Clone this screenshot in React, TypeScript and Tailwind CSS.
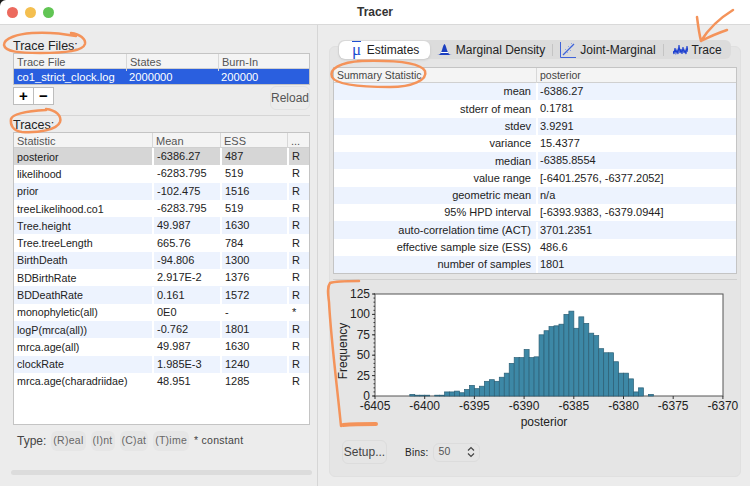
const font = "font-['Liberation_Sans',Arial,sans-serif]";

const traces = [
  ["posterior", "-6386.27", "487", "R"],
  ["likelihood", "-6283.795", "519", "R"],
  ["prior", "-102.475", "1516", "R"],
  ["treeLikelihood.co1", "-6283.795", "519", "R"],
  ["Tree.height", "49.987", "1630", "R"],
  ["Tree.treeLength", "665.76", "784", "R"],
  ["BirthDeath", "-94.806", "1300", "R"],
  ["BDBirthRate", "2.917E-2", "1376", "R"],
  ["BDDeathRate", "0.161", "1572", "R"],
  ["monophyletic(all)", "0E0", "-", "*"],
  ["logP(mrca(all))", "-0.762", "1801", "R"],
  ["mrca.age(all)", "49.987", "1630", "R"],
  ["clockRate", "1.985E-3", "1240", "R"],
  ["mrca.age(charadriidae)", "48.951", "1285", "R"],
];

const stats = [
  ["mean", "-6386.27"],
  ["stderr of mean", "0.1781"],
  ["stdev", "3.9291"],
  ["variance", "15.4377"],
  ["median", "-6385.8554"],
  ["value range", "[-6401.2576, -6377.2052]"],
  ["geometric mean", "n/a"],
  ["95% HPD interval", "[-6393.9383, -6379.0944]"],
  ["auto-correlation time (ACT)", "3701.2351"],
  ["effective sample size (ESS)", "486.6"],
  ["number of samples", "1801"],
];

// bar heights, one per half unit starting at -6405
const bins = [
  0, 0, 0, 0, 0, 0, 0, 2, 1, 1, 1, 0, 1, 1, 5, 5, 6, 4, 8, 13, 9, 12, 18, 20, 18, 23, 28, 40, 47, 47, 57, 47, 48, 75,
  80, 85, 86, 88, 100, 104, 83, 97, 89, 77, 74, 58, 53, 53, 42, 28, 28, 21, 5, 10, 0, 2,
];

function Histogram() {
  const left = 42;
  const right = 390;
  const top = 14;
  const bottom = 116;
  const xTicks = [-6405, -6400, -6395, -6390, -6385, -6380, -6375, -6370];
  const yTicks = [0, 25, 50, 75, 100, 125];
  const step = (right - left) / 70;
  const perCount = (bottom - top) / 125;
  return (
    <svg width="404" height="160" className="block overflow-visible">
      <rect x={left} y={top} width={right - left} height={bottom - top} fill="#fff" stroke="#555" strokeWidth="1" />
      {bins.map((b, i) =>
        b > 0 ? (
          <rect
            key={i}
            x={left + i * step}
            y={bottom - b * perCount}
            width={step}
            height={b * perCount}
            fill="#3d88a6"
            stroke="#2c5f75"
            strokeWidth="0.7"
          />
        ) : null,
      )}
      {yTicks.map((v) => (
        <g key={v}>
          <line x1={left - 3} x2={left} y1={bottom - v * perCount} y2={bottom - v * perCount} stroke="#333" />
          <text x={left - 5} y={bottom - v * perCount + 4} textAnchor="end" fontSize="12" fill="#222">
            {v}
          </text>
        </g>
      ))}
      {Array.from({ length: 26 }, (_, i) => (
        <line key={i} x1={left - 1.5} x2={left} y1={bottom - i * 5 * perCount} y2={bottom - i * 5 * perCount} stroke="#333" />
      ))}
      {xTicks.map((v, i) => (
        <g key={v}>
          <line x1={left + i * 49.7} x2={left + i * 49.7} y1={bottom} y2={bottom + 3} stroke="#333" />
          <text x={left + i * 49.7} y={bottom + 14} textAnchor="middle" fontSize="12" fill="#222">
            {v}
          </text>
        </g>
      ))}
      <text x="211" y="146" textAnchor="middle" fontSize="12" fill="#222">
        posterior
      </text>
      <text transform="translate(14 71) rotate(-90)" textAnchor="middle" fontSize="12" fill="#222">
        Frequency
      </text>
    </svg>
  );
}

function MuIcon() {
  return (
    <span className="relative w-[14px] text-center font-['Liberation_Serif',serif] text-[17px] leading-[15px] text-[#1f4fd0]">
      <span className="absolute left-[2px] top-[-1px] h-px w-[9px] bg-[#1f4fd0]" />
      μ
    </span>
  );
}

function DensityIcon() {
  return (
    <svg width="15" height="13" viewBox="0 0 15 13">
      <path d="M0 12 C3 12 4 10 5 7 C6 3 7 1 7.5 1 C8 1 9 3 10 7 C11 10 12 12 15 12 Z" fill="#1c3fc0" />
      <path d="M4 9.5 H11" stroke="#fff" strokeWidth="1" />
    </svg>
  );
}

function JointIcon() {
  return (
    <svg width="16" height="16" viewBox="0 0 16 16">
      <path d="M0.5 0 V15.5 H16" fill="none" stroke="#3f63d8" strokeWidth="1" />
      <path d="M3 13 L14 2" stroke="#3f63d8" strokeWidth="1.2" />
      <path d="M5 8 l1 -1 M8 5 l1 -1 M10 9 l1 -1 M12 5 l1 -1 M7 11 l1 -1 M11 2 l1 -1" stroke="#8aa2ea" strokeWidth="1" />
    </svg>
  );
}

function TraceIcon() {
  return (
    <svg width="15" height="12" viewBox="0 0 15 12">
      <path
        d="M0 7 L1 10 L2 4 L3 9 L4 6 L5 10 L6 1 L7 9 L8 5 L9 10 L10 3 L11 9 L12 6 L13 10 L14 2 L15 8"
        fill="none"
        stroke="#1c3fd0"
        strokeWidth="1.1"
      />
    </svg>
  );
}

function Annotations() {
  const orange = "#f4935a";
  return (
    <svg width="750" height="486" className="pointer-events-none absolute left-0 top-0" fill="none" stroke={orange} strokeLinecap="round" strokeLinejoin="round">
      <path strokeWidth="2.5" d="M71 33 C80 34 86 39 85 44 C83 51 66 53 40 53 C20 53 5 52 4 45 C4 38 18 34 32 33 C46 32 60 33 76 36" />
      <path strokeWidth="2.5" d="M46 109 C56 110 62 116 60 122 C57 130 38 133 22 132 C13 131 10 125 11 119 C13 113 28 111 46 110" />
      <path strokeWidth="2.5" d="M358 61 C390 60 420 62 425 71 C428 80 412 87 390 87 C365 87 336 85 332 77 C329 69 340 62 362 61" />
      <path strokeWidth="2.5" d="M733 10 C720 18 709 28 701 41 M697 17 C698 25 699 33 701 41 C709 37 718 33 727 30" />
      <path strokeWidth="2.5" d="M359 281 C348 281 336 281 330 283 C327 287 328 294 329 302 C331 340 337 385 341 426" />
      <path strokeWidth="4" d="M343 425 C354 424 366 424 376 424" />
    </svg>
  );
}

export default function App() {
  return (
    <div className={`relative flex h-[486px] w-[750px] flex-col overflow-hidden bg-[#1a1a1a] text-[11px] text-[#222] ${font}`}>
      <div className="relative flex h-[25px] shrink-0 items-center justify-center rounded-tl-[6px] border-b border-[#d9d9d9] bg-white">
        <div className="absolute left-[7px] top-[7px] flex gap-[7px]">
          <span className="h-[11px] w-[11px] rounded-full bg-[#ec6a5e]" />
          <span className="h-[11px] w-[11px] rounded-full bg-[#f4bf4f]" />
          <span className="h-[11px] w-[11px] rounded-full bg-[#61c554]" />
        </div>
        <span className="text-[12px] font-bold text-[#333]">Tracer</span>
      </div>

      <div className="flex flex-1 bg-[#ececec]">
        {/* left column */}
        <div className="flex w-[318px] shrink-0 flex-col border-r border-[#d6d6d6] pl-[13px] pr-[7px]">
          <div className="flex h-[28px] items-end text-[12.5px] leading-[14px]">Trace Files:</div>
          <div className="w-[297px] border border-[#c4c4c4] bg-white">
            <div className="grid h-[15px] grid-cols-[112px_92px_1fr] items-center border-b border-[#d0d0d0] bg-[#f4f4f4] text-[#555]">
              <span className="pl-[3px]">Trace File</span>
              <span className="border-l border-[#d8d8d8] pl-[3px]">States</span>
              <span className="border-l border-[#d8d8d8] pl-[3px]">Burn-In</span>
            </div>
            <div className="grid h-[15px] grid-cols-[112px_92px_1fr] items-center bg-[#2a5fdf] text-[11.2px] text-white">
              <span className="pl-[3px]">co1_strict_clock.log</span>
              <span className="pl-[3px]">2000000</span>
              <span className="pl-[3px]">200000</span>
            </div>
          </div>

          <div className="flex h-[31px] items-start justify-between border-b border-[#d6d6d6]">
            <div className="mt-[2px] flex h-[18px] w-[41px] border border-[#bdbdbd] bg-white text-[15px] font-bold leading-[15px] text-black">
              <span className="flex-1 border-r border-[#bdbdbd] text-center">+</span>
              <span className="flex-1 text-center">−</span>
            </div>
            <div className="mt-[1px] flex h-[24px] w-[40px] items-center justify-center rounded-md border border-[#e2e2e2] text-[12px] text-[#555]">
              Reload
            </div>
          </div>

          <div className="flex h-[16px] items-end text-[12.5px] leading-[14px]">Traces:</div>
          <div className="flex h-[293px] w-[297px] flex-col border border-[#c4c4c4] bg-white">
            <div className="grid h-[15px] shrink-0 grid-cols-[138px_68px_67px_1fr] items-center border-b border-[#d0d0d0] bg-[#f4f4f4] text-[#555]">
              <span className="pl-[3px]">Statistic</span>
              <span className="border-l border-[#d8d8d8] pl-[3px]">Mean</span>
              <span className="border-l border-[#d8d8d8] pl-[3px]">ESS</span>
              <span className="border-l border-[#d8d8d8] pl-[3px]">...</span>
            </div>
            {traces.map((row, i) => (
              <div
                key={row[0]}
                className={`grid h-[17.3px] shrink-0 grid-cols-[138px_68px_67px_1fr] items-center ${
                  i === 0 ? "bg-[#d6d6d6]" : i % 2 === 0 ? "bg-[#edf3fe]" : "bg-white"
                }`}
              >
                <span className="pl-[3px] text-[10.7px]">{row[0]}</span>
                <span className="border-l-2 border-white pl-[3px] leading-[17px]">{row[1]}</span>
                <span className="border-l-2 border-white pl-[3px] leading-[17px]">{row[2]}</span>
                <span className="border-l-2 border-white pl-[3px] leading-[17px]">{row[3]}</span>
              </div>
            ))}
          </div>

          <div className="mt-[6px] flex h-[20px] items-center text-[#444]">
            <span className="ml-[4px] mr-[5px] text-[12px]">Type:</span>
            <span className="mr-[5px] rounded-md bg-[#e6e6e6] px-[2px] py-[2px] text-[10.5px] tracking-wide text-[#666]">(R)eal</span>
            <span className="mr-[5px] rounded-md bg-[#e6e6e6] px-[2px] py-[2px] text-[10.5px] tracking-wide text-[#666]">(I)nt</span>
            <span className="mr-[5px] rounded-md bg-[#e6e6e6] px-[2px] py-[2px] text-[10.5px] tracking-wide text-[#666]">(C)at</span>
            <span className="mr-[5px] rounded-md bg-[#e6e6e6] px-[2px] py-[2px] text-[10.5px] tracking-wide text-[#666]">(T)ime</span>
            <span className="text-[10.5px] tracking-wide">* constant</span>
          </div>

          <div className="-ml-[2px] mt-[19px] h-[5px] w-[301px] rounded-full bg-[#dcdcdc]" />
        </div>

        {/* right column */}
        <div className="flex-1 pl-[11px] pr-[9px] pt-[21px]">
          <div className="flex h-[431px] flex-col rounded-md border border-[#e0e0e0] bg-[#e5e5e5] px-[3px]">
            <div className="mx-[5px] -mt-[7px] flex h-[19px] w-[393px] shrink-0 items-center rounded-md bg-[#dcdcdc] text-[12px]">
              <div className="ml-[1px] flex h-[18px] w-[91px] items-center justify-center gap-[3px] rounded-md bg-white shadow-sm">
                <MuIcon />
                <span>Estimates</span>
              </div>
              <div className="flex w-[122px] items-center justify-center gap-[4px]">
                <DensityIcon />
                <span>Marginal Density</span>
              </div>
              <span className="h-[12px] w-px bg-[#c4c4c4]" />
              <div className="flex w-[110px] items-center justify-center gap-[4px]">
                <JointIcon />
                <span>Joint-Marginal</span>
              </div>
              <span className="h-[12px] w-px bg-[#c4c4c4]" />
              <div className="flex flex-1 items-center justify-center gap-[3px]">
                <TraceIcon />
                <span>Trace</span>
              </div>
            </div>

            <div className="mt-[8px] flex h-[207px] flex-col border border-[#c4c4c4] bg-white">
              <div className="grid h-[15px] shrink-0 grid-cols-[202px_1fr] items-center border-b border-[#d0d0d0] bg-[#f4f4f4] text-[10.5px] text-[#444]">
                <span className="pl-[3px]">Summary Statistic</span>
                <span className="border-l border-[#d8d8d8] pl-[3px]">posterior</span>
              </div>
              {stats.map((row, i) => (
                <div key={row[0]} className={`grid h-[17.3px] shrink-0 grid-cols-[202px_1fr] items-center ${i % 2 === 0 ? "bg-[#edf3fe]" : "bg-white"}`}>
                  <span className="pr-[5px] text-right">{row[0]}</span>
                  <span className="border-l-2 border-white pl-[2px] leading-[17px]">{row[1]}</span>
                </div>
              ))}
            </div>

            <div className="mt-[5px] border-t border-[#d0d0d0]">
              <Histogram />
            </div>

            <div className="flex items-center pl-[9px]">
              <div className="flex h-[24px] w-[45px] items-center justify-center rounded-md border border-[#dcdcdc] text-[12px] text-[#444]">
                Setup...
              </div>
              <span className="ml-[18px] text-[10px] tracking-wide">Bins:</span>
              <div className="ml-[5px] flex h-[19px] w-[47px] items-center justify-between rounded-md border border-[#dcdcdc] px-[4px] text-[10.5px] tracking-wide text-[#555]">
                <span>50</span>
                <svg width="8" height="12" viewBox="0 0 8 12" fill="none" stroke="#444" strokeWidth="1.2">
                  <path d="M1 4.5 L4 1.5 L7 4.5 M1 7.5 L4 10.5 L7 7.5" />
                </svg>
              </div>
            </div>
          </div>
        </div>
      </div>

      <Annotations />
    </div>
  );
}
